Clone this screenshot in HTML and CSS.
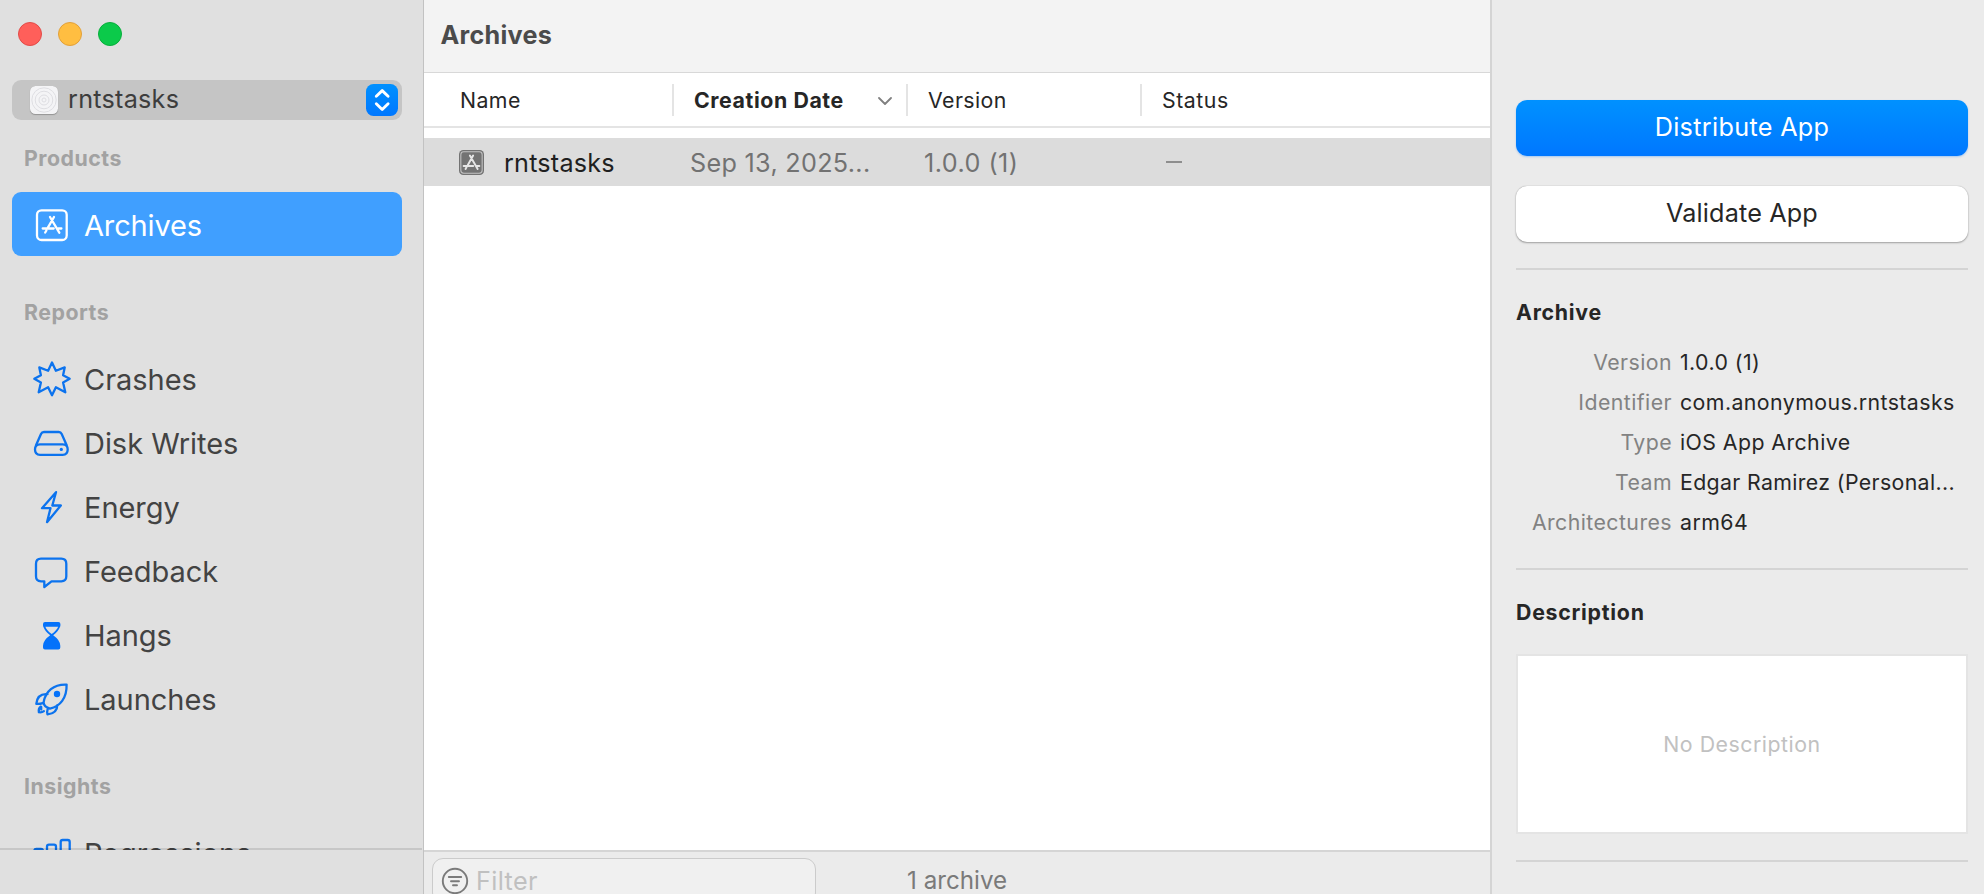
FILE: index.html
```
<!DOCTYPE html>
<html lang="en">
<head>
<meta charset="utf-8">
<title>Archives</title>
<link rel="stylesheet" href="styles.css">
</head>
<body>
<div class="window">
  <aside class="sidebar">
    <div class="traffic">
      <span class="light red"></span><span class="light yellow"></span><span class="light green"></span>
    </div>
    <div class="app-picker">
      <svg class="app-icon" viewBox="0 0 28 28">
        <rect width="28" height="28" rx="5.5" fill="#f4f4f6"/>
        <g fill="none" stroke="#dedee2"><circle cx="14" cy="14" r="12.2"/><circle cx="14" cy="14" r="8.8"/><circle cx="14" cy="14" r="5"/><circle cx="14" cy="14" r="2"/></g>
      </svg>
      <span class="app-name">rntstasks</span>
      <svg class="stepper" viewBox="0 0 32 32">
        <defs><linearGradient id="sg" x2="0" y2="1"><stop stop-color="#0091ff"/><stop offset="1" stop-color="#0077ff"/></linearGradient></defs>
        <rect width="32" height="32" rx="7.5" fill="url(#sg)"/>
        <path d="M10.3 12.3 16.2 6.6l5.9 5.7M10.3 19.8l5.9 5.7 5.900-5.700" fill="none" stroke="#fff" stroke-width="2.9" stroke-linecap="round" stroke-linejoin="round"/>
      </svg>
    </div>
    <nav class="nav">
      <section class="group">
        <h2 class="group-label">Products</h2>
        <a class="item selected">
          <svg class="icon" viewBox="0 0 40 40"><rect x="5" y="6.3" width="29.7" height="29.7" rx="4.5"/><path d="M22 13l-6.4 11.1M14.4 26.5l-1.2 2M18 13l9.3 15.7M10.7 24.5h11M26.2 24.5h3.2"/></svg>
          <span>Archives</span>
        </a>
      </section>
      <section class="group">
        <h2 class="group-label">Reports</h2>
        <a class="item">
          <svg class="icon" viewBox="0 0 40 40"><path d="M20 4.5l3.9 8.3 8.8-3.4-1.6 7.9 6.6 3.5-6.6 3.6 2.2 9.9-9.4-5L20 37.3l-3.9-8-9.4 5 2.2-9.9-6.6-3.6 6.6-3.5-1.6-7.9 8.8 3.4z"/></svg>
          <span>Crashes</span>
        </a>
        <a class="item">
          <svg class="icon" viewBox="0 0 40 40"><path d="M3.9 23.5 9 12q.9-2 3-2h14.7q2.1 0 3 2l5.1 11.500M8 22.300h22.700q5 0 5 5.300t-5 5.300H8q-5 0-5-5.300t5-5.300z"/><circle class="solid" cx="29.3" cy="27.400" r="1.600"/></svg>
          <span>Disk Writes</span>
        </a>
        <a class="item">
          <svg class="icon" viewBox="0 0 40 40"><path d="M24 6.200 10 22.200h8.500L15 36.200l13.800-16.700h-8.500z"/></svg>
          <span>Energy</span>
        </a>
        <a class="item">
          <svg class="icon" viewBox="0 0 40 40"><path d="M9 8.700h20.300q5 0 5 5v12.600q0 5-5 5H19.500L12.300 37v-5.700H9q-5 0-5-5V13.700q0-5 5-5z"/></svg>
          <span>Feedback</span>
        </a>
        <a class="item">
          <svg class="icon" viewBox="0 0 40 40"><path class="solid" d="M13 8h13.400q2 0 2 2v1.500q0 1.200-.7 2-1.200 3.700-6.500 7.700 7.100 5 7.100 10.600v1.600q0 2-2 2H13q-2 0-2-2v-1.600q0-5.600 7.200-10.600-5.400-4-6.500-7.700-.7-.8-.7-2V10q0-2 2-2z"/><path class="cut" d="M13.400 12.800h12.700q-1.200 3.600-6.400 7.200-5.200-3.600-6.300-7.200z"/></svg>
          <span>Hangs</span>
        </a>
        <a class="item">
          <svg class="icon" viewBox="0 0 40 40"><path d="M34.600 6.600C21.500 6 13.500 13.500 11.600 24.300q.3 4.500 6.300 6.300C28 28.500 35 20 34.600 6.600zM15.500 16.200C8 15.500 5 19.500 4.300 25.800q2.500.5 7.300-1M25.300 27.200q0 8-9.800 9.200-.8-2.400.3-6.100M8.600 28.700q-2.400 1.600-1.700 5.500 3 .5 5-1M9.200 29v2.500"/><circle class="solid" cx="25" cy="16" r="3.200"/></svg>
          <span>Launches</span>
        </a>
      </section>
      <section class="group">
        <h2 class="group-label">Insights</h2>
        <a class="item">
          <svg class="icon" viewBox="0 0 40 40"><rect x="2.300" y="17" width="8.700" height="18" rx="2"/><rect x="15" y="12.700" width="9" height="22" rx="2"/><rect x="28.700" y="8" width="9" height="27" rx="2"/></svg>
          <span>Regressions</span>
        </a>
      </section>
    </nav>
  </aside>

  <main class="main">
    <header class="title">Archives</header>
    <div class="cols head">
      <div class="cell">Name</div>
      <div class="cell sorted">Creation Date
        <svg class="chevron" viewBox="0 0 14 8"><path d="M1 1l6 6 6-6" fill="none" stroke="#808080" stroke-width="1.800" stroke-linecap="round" stroke-linejoin="round"/></svg>
      </div>
      <div class="cell">Version</div>
      <div class="cell">Status</div>
    </div>
    <div class="rows">
      <div class="cols row">
        <div class="cell name">
          <svg class="archive-icon" viewBox="0 0 26 26"><rect width="26" height="26" rx="4.500" fill="#737373"/><rect x="1.900" y="1.900" width="22.200" height="22.200" rx="3" fill="none" stroke="#c4c4c4" stroke-width="1.100"/><path d="M14.700 5.800 9.200 15.600M7.800 18l-1 1.700M11.300 5.800l8.100 14M4.800 16.600h10M18.500 16.600h2.700" fill="none" stroke="#e6e6e6" stroke-width="2" stroke-linecap="round"/></svg>
          <span>rntstasks</span>
        </div>
        <div class="cell date"><span>Sep 13, 2025...</span></div>
        <div class="cell version"><span>1.0.0 (1)</span></div>
        <div class="cell status"><div class="dash"></div></div>
      </div>
    </div>
    <footer class="footer">
      <div class="filter">
        <svg class="filter-icon" viewBox="0 0 28 28"><g fill="none" stroke="#7a7a7a" stroke-width="1.900" stroke-linecap="round"><circle cx="14" cy="14" r="12.200"/><path d="M7.800 10h12.400M10 14.200h8M12 18.300h4"/></g></svg>
        <span>Filter</span>
      </div>
      <div class="count">1 archive</div>
    </footer>
  </main>

  <aside class="inspector">
    <button class="btn primary">Distribute App</button>
    <button class="btn">Validate App</button>
    <hr class="rule">
    <h3 class="heading">Archive</h3>
    <dl class="details">
      <dt>Version</dt><dd>1.0.0 (1)</dd>
      <dt>Identifier</dt><dd>com.anonymous.rntstasks</dd>
      <dt>Type</dt><dd>iOS App Archive</dd>
      <dt>Team</dt><dd class="team">Edgar Ramirez (Personal...</dd>
      <dt>Architectures</dt><dd>arm64</dd>
    </dl>
    <hr class="rule">
    <h3 class="heading">Description</h3>
    <div class="description">No Description</div>
    <hr class="rule">
  </aside>
</div>
</body>
</html>
```
FILE: styles.css
```
* { box-sizing: border-box; }
body { margin: 0; font-family: Inter, "Liberation Sans", sans-serif; font-size: 21.3px; letter-spacing: .43px; color: #262626; }
h2, h3, dl, dd { margin: 0; }
svg { display: block; flex: none; }

.window { display: grid; grid-template-columns: 424px 1066px 1fr; height: 894px; overflow: hidden; white-space: nowrap; }

/* Sidebar */
.sidebar { display: flex; flex-direction: column; background: #e0e0e0; border-right: 1px solid #c2c2c2; padding-bottom: 44px; height: 894px; }
.traffic { display: flex; gap: 16px; padding: 22px 18px 34px; }
.light { width: 24px; height: 24px; border-radius: 50%; border: 1px solid; }
.red { background: #ff5f5a; border-color: #e24b48; }
.yellow { background: #ffbe41; border-color: #e2a03a; }
.green { background: #0bca4a; border-color: #08ae3c; }

.app-picker { display: flex; align-items: center; height: 40px; margin: 0 21px 0 12px; padding: 0 4px 0 18px; border-radius: 9px; background: #c5c5c5; flex: none; }
.app-icon { width: 28px; height: 28px; border-radius: 5.5px; box-shadow: 0 1px 1px rgba(0,0,0,.25); }
.app-name { flex: 1; padding: 0 0 3px 10px; font-size: 25.2px; letter-spacing: .25px; color: #3d3d3d; }
.stepper { width: 32px; height: 32px; }

.nav { flex: 1; min-height: 0; overflow: hidden; padding: 8px 21px 0 12px; position: relative; }
.nav::after { content: ""; position: absolute; left: 0; right: 1px; bottom: 0; height: 2px; background: rgba(0,0,0,.11); }
.group { margin-bottom: 26px; }
.group-label { height: 64px; padding-left: 12px; font-size: 21.3px; font-weight: 700; line-height: 60px; letter-spacing: .52px; color: #a2a2a2; }
.item { display: flex; align-items: center; gap: 12px; height: 64px; padding-left: 20px; border-radius: 9px; font-size: 29px; letter-spacing: -.04px; color: #434343; }
.item span { padding-top: 3px; }
.icon { width: 40px; height: 40px; fill: none; stroke: #0c73ee; stroke-width: 2.3; stroke-linecap: round; stroke-linejoin: round; }
.icon .solid { fill: #0572fa; stroke: none; }
.icon .cut { fill: #e0e0e0; stroke: none; }
.selected { background: #409fff; color: #fff; }
.selected .icon { stroke: #fff; }
.selected span { letter-spacing: -.15px; }

/* Archive list */
.main { display: flex; flex-direction: column; height: 894px; background: #fff; }
.title { height: 73px; padding: 0 0 2px 16.500px; border-bottom: 1px solid #d8d8d8; background: #f3f3f3; font-size: 25.2px; font-weight: 700; line-height: 71px; letter-spacing: .25px; color: #4b4b4b; }
.cols { display: grid; grid-template-columns: 250px 234px 234px 1fr; }
.cell { display: flex; align-items: center; }
.head { height: 55px; padding: 11px 0 10px; border-bottom: 2px solid #e4e4e4; }
.head .cell { border-right: 2px solid #e4e4e4; padding-left: 20px; }
.head .cell:first-child { padding-left: 36px; }
.head .cell:last-child { border-right: 0; letter-spacing: .55px; }
.head .sorted { justify-content: space-between; padding-right: 14px; font-weight: 700; letter-spacing: .59px; }
.chevron { width: 14px; height: 8px; margin-top: 1px; }
.rows { flex: 1; padding-top: 10px; border-bottom: 2px solid #d5d5d5; }
.row { height: 48px; background: #dcdcdc; font-size: 25.2px; letter-spacing: .3px; color: #727272; }
.row span { padding-top: 2px; }
.name { padding-left: 35px; gap: 19px; color: #1f1f1f; letter-spacing: .2px; }
.archive-icon { width: 25px; height: 25px; margin: 1px 1px 0 0; }
.date { padding-left: 16px; }
.version { padding-left: 16px; letter-spacing: .45px; }
.status { padding-left: 24px; }
.dash { width: 16px; height: 2px; background: #8e8e8e; }
.footer { display: flex; height: 42px; padding: 6px 8px 0; background: #ebebeb; overflow: hidden; }
.filter { display: flex; align-items: center; gap: 7px; width: 384px; height: 46px; padding: 0 8px; border: 1px solid #cbcbcb; border-radius: 11px; background: #f0f0f0; font-size: 25.2px; letter-spacing: .38px; color: #c0c0c0; }
.filter-icon { width: 28px; height: 28px; }
.count { margin-left: 91px; font-size: 24.2px; line-height: 46px; letter-spacing: 0; color: #7a7a7a; }

/* Inspector */
.inspector { border-left: 2px solid #d4d4d4; padding: 100px 16px 0 24px; background: #ebebeb; }
.btn { display: block; width: 100%; height: 56px; margin: 0 0 30px; padding: 0 0 2px; border: 0; border-radius: 11px; background: #fff; box-shadow: 0 0 1px rgba(0,0,0,.3), 0 1px 2px rgba(0,0,0,.3); font: 25.2px Inter, sans-serif; letter-spacing: .16px; color: #262626; }
.primary { background: linear-gradient(#0091ff, #0077ff); box-shadow: 0 1px 2px rgba(0,120,255,.3); letter-spacing: .33px; color: #fff; }
.rule { height: 2px; margin: 26px 0 0; border: 0; background: #d4d4d4; }
.btn + .rule { margin-top: -4px; }
.heading { height: 72px; padding-top: 12px; font-size: 21.3px; font-weight: 700; line-height: 60px; letter-spacing: .75px; }
.details { display: grid; grid-template-columns: 156px 1fr; grid-auto-rows: 40px; column-gap: 8px; line-height: 40px; }
.details dt { text-align: right; color: #828282; }
.details .team { letter-spacing: .36px; }
.description { display: flex; align-items: center; justify-content: center; height: 180px; margin-top: 12px; border: 2px solid #e4e4e4; background: #fff; letter-spacing: .53px; color: #c1c1c1; }
```
